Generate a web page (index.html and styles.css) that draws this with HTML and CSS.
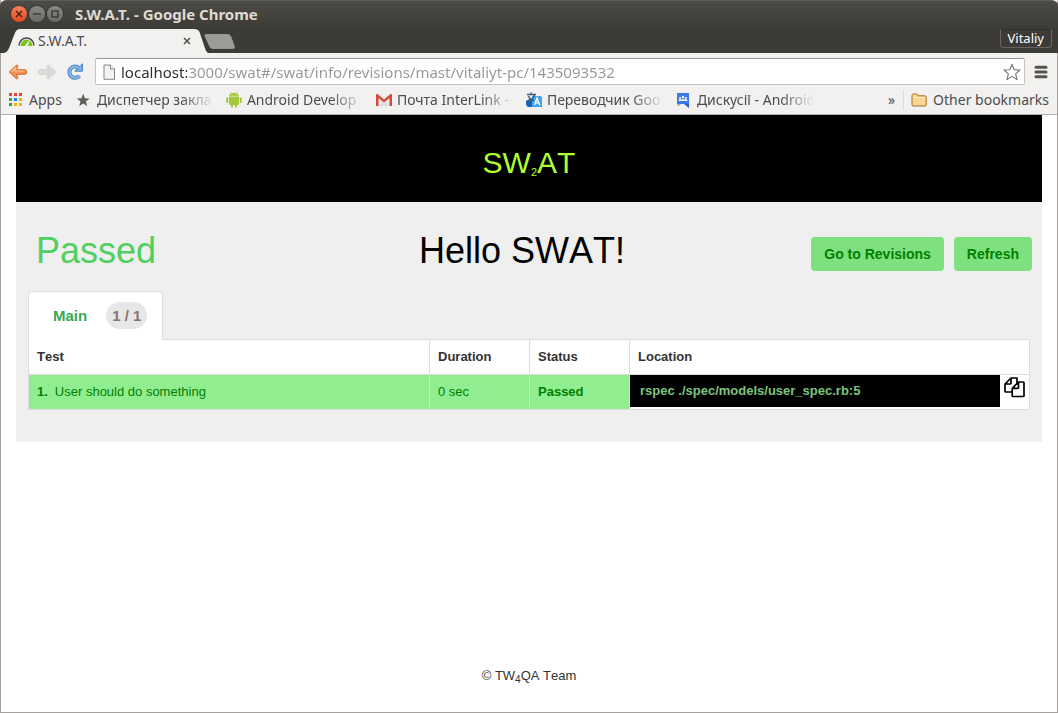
FILE: index.html
```html
<!DOCTYPE html>
<html lang="en">
<head>
<meta charset="utf-8">
<title>S.W.A.T.</title>
<link rel="stylesheet" href="styles.css">
</head>
<body>
<div class="window">
  <header class="frame">
    <div class="titlebar">
      <div class="window-buttons">
        <button class="wbtn wbtn-close" type="button" aria-label="Close window"><svg viewBox="0 0 16 16" width="16" height="16"><path d="M5 5l6 6M11 5l-6 6" stroke="#4a1c0c" stroke-width="1.4"/></svg></button>
        <button class="wbtn" type="button" aria-label="Minimize"><svg viewBox="0 0 16 16" width="16" height="16"><path d="M4 8h8" stroke="#3a3935" stroke-width="1.4"/></svg></button>
        <button class="wbtn" type="button" aria-label="Maximize"><svg viewBox="0 0 16 16" width="16" height="16"><rect x="5" y="5" width="6" height="6" fill="none" stroke="#3a3935" stroke-width="1.4"/></svg></button>
      </div>
      <span class="window-title">S.W.A.T. - Google Chrome</span>
    </div>
    <div class="tabstrip">
      <div class="browser-tab">
        <svg class="tab-shape" viewBox="0 0 204 25" preserveAspectRatio="none" aria-hidden="true"><path d="M0 25C3 24 4 22 5 20L11 4Q12.500 0 16 0H190Q194 0 195.500 3L201 20Q202 24 204 25Z" fill="#f2f1f0"/></svg>
        <svg class="favicon" viewBox="0 0 17 10" width="17" height="10" aria-hidden="true"><path d="M1 9.500A7.500 7.500 0 0 1 16 9.500" fill="none" stroke="#454a50" stroke-width="1.500"/><path d="M2.500 10A6 6.500 0 0 1 14.500 10Z" fill="#7ac51c"/><path d="M7 9.500L12 3.500L9.500 10Z" fill="#fff"/></svg>
        <span class="tab-title">S.W.A.T.</span>
        <button class="tab-close" type="button" aria-label="Close tab"><svg viewBox="0 0 8 8" width="8" height="8"><path d="M1 1l6 6M7 1L1 7" stroke="#55534f" stroke-width="1.600"/></svg></button>
      </div>
      <button class="new-tab" type="button" aria-label="New tab"><svg viewBox="0 0 32 15" width="32" height="15"><path d="M2 .5H24Q26 .5 27 3L30.500 13Q31 14.500 29 14.500H9Q6.500 14.500 5.500 12L1 2Q.5.500 2 .5Z" fill="#9d9c9a" stroke="#b3b2af" stroke-width=".6"/></svg></button>
      <button class="profile" type="button">Vitaliy</button>
    </div>
  </header>

  <nav class="toolbar" aria-label="Navigation">
    <button class="nav-btn" type="button" aria-label="Back"><svg viewBox="0 0 20 16" width="20" height="16"><path d="M8.500 1.200Q9.800 1 10 2.200L8.200 5.800H17Q18.600 6 18.600 8T17 10.200H8.200L10 13.800Q9.800 15 8.500 14.800L1.300 8Z" fill="#f2925a" stroke="#dc5c1e"/><path d="M3.500 7.800L8 3.500L6.800 7H16.500" fill="none" stroke="#fbc08c" stroke-width="1.200"/></svg></button>
    <button class="nav-btn" type="button" aria-label="Forward"><svg viewBox="0 0 20 16" width="20" height="16"><path d="M11.500 1.200Q10.200 1 10 2.200L11.800 5.800H3Q1.400 6 1.400 8T3 10.200H11.800L10 13.800Q10.200 15 11.500 14.800L18.700 8Z" fill="#dddcda" stroke="#cfcecc"/></svg></button>
    <button class="nav-btn" type="button" aria-label="Reload"><svg viewBox="0 0 18 18" width="18" height="18"><path d="M13.500 12.800A5.700 5.700 0 1 1 13 5" fill="none" stroke="#4c86c4" stroke-width="4"/><path d="M16.500.8V8.200H8.800Z" fill="#7aaede" stroke="#4c86c4"/><path d="M13.500 12.800A5.700 5.700 0 1 1 13 5" fill="none" stroke="#8abbe8" stroke-width="2"/></svg></button>
    <div class="omnibox">
      <svg viewBox="0 0 12 16" width="12" height="16" aria-hidden="true"><path d="M1 1H7.500L11.500 5V15.300H1Z" fill="#f4f4f4" stroke="#858585"/><path d="M7.500 1V5H11.500" fill="#fff" stroke="#858585"/></svg>
      <input class="url" type="text" aria-label="Address" value="localhost:3000/swat#/swat/info/revisions/mast/vitaliyt-pc/1435093532">
      <button class="star-btn" type="button" aria-label="Bookmark this page"><svg viewBox="0 0 18 18" width="18" height="18"><path d="M9 1.200L11.200 6.700L17 7L12.600 10.800L14 16.600L9 13.400L4 16.600L5.400 10.800L1 7L6.800 6.700Z" fill="#fff" stroke="#777" stroke-width="1.100" stroke-linejoin="round"/></svg></button>
    </div>
    <button class="menu-btn" type="button" aria-label="Menu"><svg viewBox="0 0 14 14" width="14" height="14"><path d="M2 2.200H12M2 7H12M2 11.800H12" stroke="#55534f" stroke-width="3" stroke-linecap="round"/></svg></button>
  </nav>

  <nav class="bookmarks" aria-label="Bookmarks">
    <a class="bookmark apps" href="#"><svg viewBox="0 0 13 13" width="13" height="13"><path d="M0 0h3v3h-3zM5 0h3v3h-3zM10 0h3v3h-3z" fill="#ea4335"/><path d="M0 5h3v3h-3z" fill="#34a853"/><path d="M5 5h3v3h-3z" fill="#2a7ff0"/><path d="M10 5h3v3h-3zM5 10h3v3h-3zM10 10h3v3h-3z" fill="#f4b400"/><path d="M0 10h3v3h-3z" fill="#2d9a50"/></svg><span>Apps</span></a>
    <a class="bookmark" href="#"><svg viewBox="0 0 16 16" width="16" height="16"><path d="M7.200 1.500L8.900 6.200L13.700 6.400L9.900 9.500L11.200 14.200L7.200 11.500L3.200 14.200L4.500 9.500L.7 6.400L5.500 6.200Z" fill="#62605c"/></svg><span class="bookmark-label">Диспетчер закла</span></a>
    <a class="bookmark" href="#"><svg viewBox="0 0 16 16" width="16" height="16"><path d="M3 5H13V12Q13 13 12 13H11V15.500H9V13H7V15.500H5V13H4Q3 13 3 12ZM.3 5.500H2.200V11H.3ZM13.800 5.500H15.700V11H13.800ZM3 4.500Q3 2.400 5 1.500L4 .3L4.500 0L5.600 1.200Q8 .5 10.400 1.200L11.500 0L12 .3L11 1.500Q13 2.400 13 4.500Z" fill="#a4c639"/><path d="M5.500 2.500h1v1h-1zM9.500 2.500h1v1h-1z" fill="#fff"/></svg><span class="bookmark-label">Android Develop</span></a>
    <a class="bookmark" href="#"><svg viewBox="0 0 16 16" width="16" height="16"><path d="M1 2H15V14H1Z" fill="#eee"/><path d="M3 14L8 8L13 14" fill="#dedede"/><path d="M0 14V3Q0 1.500 1.500 2L8 7.500L14.500 2Q16 1.500 16 3V14H13.500V6L8 10.500L2.500 6V14Z" fill="#d9483b"/></svg><span class="bookmark-label">Почта InterLink -</span></a>
    <a class="bookmark" href="#"><svg viewBox="0 0 16 16" width="16" height="16"><path d="M0 9L4 7L8 10V15H2Q0 14 0 12Z" fill="#1763b8"/><path d="M6 4H14.500Q16 4 16 5.500V15H6Z" fill="#42a5ec"/><path d="M8.500 13L11 6L13.700 13M9.500 10.800H12.800" fill="none" stroke="#fff" stroke-width="1.300"/><path d="M1 2.500H10M5 .5V3M8.500 3Q7 7.500 1 9M2.500 4Q4 8 8 8.500" fill="none" stroke="#425d76" stroke-width="1.500"/></svg><span class="bookmark-label">Переводчик Goo</span></a>
    <a class="bookmark" href="#"><svg viewBox="0 0 16 16" width="16" height="16"><path d="M1 1H13V13.500L10 12H1Z" fill="#3b78e7"/><path d="M13 12V16L8 12Z" fill="#2a5bc4"/><path d="M1 12H5L2 14.500Z" fill="#aaa"/><circle cx="7" cy="5" r="1.300" fill="#fff"/><circle cx="4" cy="6" r="1" fill="#fff"/><circle cx="10" cy="6" r="1" fill="#fff"/><path d="M2.500 9V8Q4 7 5.200 7.500Q7 6.300 8.800 7.500Q10 7 11.500 8V9Z" fill="#fff"/></svg><span class="bookmark-label">Дискусії - Android</span></a>
    <button class="overflow" type="button" aria-label="More bookmarks">»</button>
    <a class="bookmark other" href="#"><svg viewBox="0 0 16 14" width="16" height="14"><path d="M1 12V2.500Q1 1 2.500 1H5.500Q7 1 7 2.800H14Q15.200 3 15.200 4V12Q15.200 13 14 13H2Q1 13 1 12Z" fill="#f9d78e" stroke="#a8702c"/><path d="M2 4.500H14.200" stroke="#fff0c4"/></svg><span>Other bookmarks</span></a>
  </nav>

  <div class="page">
    <header class="banner"><span>SW<sub>2</sub>AT</span></header>
    <main class="panel">
      <div class="heading">
        <div class="result">Passed</div>
        <h1 class="title">Hello SWAT!</h1>
        <div class="actions">
          <button class="btn" type="button">Go to Revisions</button>
          <button class="btn" type="button">Refresh</button>
        </div>
      </div>
      <button class="suite-tab" type="button"><span>Main</span><span class="badge">1 / 1</span></button>
      <table class="results">
        <colgroup><col><col class="c-small"><col class="c-small"><col class="c-loc"></colgroup>
        <thead>
          <tr><th>Test</th><th>Duration</th><th>Status</th><th>Location</th></tr>
        </thead>
        <tbody>
          <tr class="passed">
            <td><b class="num">1.</b>User should do something</td>
            <td>0 sec</td>
            <td><b>Passed</b></td>
            <td class="loc"><div class="loc-row"><span class="command">rspec ./spec/models/user_spec.rb:5</span><button class="copy" type="button" aria-label="Copy command"><svg viewBox="0 0 21 21" width="21" height="21"><path d="M7 1H13V6M13 6.500V1.800Q13 1 12.200 1H7L1 7V14.200Q1 15 1.800 15H8M7 1V6.200Q7 7 6.200 7H1" fill="none" stroke="#000" stroke-width="1.700" stroke-linejoin="round"/><path d="M14.500 5H19.200Q20 5 20 5.800V18.700Q20 19.500 19.200 19.500H9Q8.200 19.500 8.200 18.700V11.300ZM14.500 5V10.500Q14.500 11.300 13.700 11.300H8.200" fill="#fff" stroke="#000" stroke-width="1.700" stroke-linejoin="round"/></svg></button></div></td>
          </tr>
        </tbody>
      </table>
    </main>
    <footer class="footer"><span>© TW<sub>4</sub>QA Team</span></footer>
  </div>
</div>
</body>
</html>
```
FILE: styles.css
```css
* { box-sizing: border-box; }
body { margin: 0; background: #fff; font-family: "Liberation Sans", Arial, sans-serif; }
button { border: 0; padding: 0; background: none; font: inherit; color: inherit; }
svg { display: block; flex: none; }

.window { display: flex; flex-direction: column; min-height: 100vh; border: solid #a5a19c; border-width: 0 1px 1px; }

.frame { margin: 0 -1px; background: linear-gradient(#4d4b46, #3c3b37 28px); border-top: 1px solid #5e5c57; border-radius: 6px 6px 0 0; font-family: "Noto Sans", sans-serif; }
.titlebar { display: flex; align-items: center; gap: 12px; height: 28px; padding: 0 0 2px 11px; }
.window-buttons { display: flex; gap: 2px; }
.wbtn { width: 16px; height: 16px; border-radius: 50%; background: linear-gradient(#8a8882, #6b6963); box-shadow: 0 0 0 1px #373632; }
.wbtn-close { background: linear-gradient(#f58058, #df4b1c); }
.window-title { color: #dfdbd2; font-size: 15px; font-weight: 700; line-height: 20px; }

.tabstrip { display: flex; align-items: flex-start; height: 24px; padding: 0 6px 0 4px; }
.browser-tab { position: relative; display: flex; align-items: center; width: 204px; height: 24px; padding: 0 15px 0 14px; }
.tab-shape { position: absolute; inset: 0; width: 100%; height: 100%; }
.favicon, .tab-title, .tab-close { position: relative; }
.tab-title { flex: 1; margin-left: 3px; color: #4c4c4c; font-size: 14px; line-height: 18px; }
.tab-close { padding: 2px; }
.new-tab { margin: 5px auto 0 -4px; }
.profile { height: 19px; padding: 0 7px; border: 1px solid #68665f; border-top-color: #302f2c; border-radius: 0 0 4px 4px; color: #fff; font-size: 13px; line-height: 17px; }

.toolbar { display: flex; align-items: center; gap: 9px; height: 34px; padding: 3px 9px 0 7px; background: #f2f1f0; }
.omnibox { display: flex; flex: 1; align-items: center; gap: 6px; height: 27px; padding: 0 3px 0 7px; margin-left: 2px; background: #fff; border: 1px solid #c6c3bf; border-top-color: #9b9894; border-radius: 2px; }
.url { flex: 1; min-width: 0; height: 22px; padding: 0; border: 0; outline: 0; background: linear-gradient(90deg, #2b2b2b 66px, #969696 66px); -webkit-background-clip: text; background-clip: text; color: transparent; font-family: "Noto Sans", sans-serif; font-size: 15px; }

.bookmarks { display: flex; align-items: center; height: 28px; padding: 0 8px 2px; background: #f2f1f0; border-bottom: 1px solid #b5b2ae; color: #4c4c4c; font-family: "Noto Sans", sans-serif; font-size: 14px; line-height: 20px; }
.bookmark { display: flex; align-items: center; gap: 5px; margin-right: 12px; color: inherit; text-decoration: none; white-space: nowrap; }
.apps { gap: 7px; margin-right: 14px; }
.bookmark-label { width: 117px; overflow: hidden; -webkit-mask-image: linear-gradient(90deg, #000 84px, transparent); mask-image: linear-gradient(90deg, #000 84px, transparent); }
.overflow { margin-left: auto; padding: 0 8px; }
.other { gap: 6px; margin: 0; padding-left: 7px; border-left: 1px solid #d8d9dc; }

.page { display: flex; flex: 1; flex-direction: column; padding: 0 15px; background: #fff; font-kerning: none; }
.banner { display: flex; align-items: center; justify-content: center; height: 87px; padding-top: 9px; background: #000; color: #adff2f; font-size: 30px; line-height: 40px; }
.banner sub { font-size: 11px; line-height: 0; vertical-align: -3px; }
.panel { padding: 24px 12px 32px; background: #efefef; }
.heading { display: grid; grid-template-columns: 3fr 4fr 3fr; align-items: center; margin: 0 -2px 16px 8px; }
.result { color: #50d060; font-size: 36px; line-height: 49px; }
.title { margin: 0; padding-right: 24px; font-size: 36px; font-weight: 400; line-height: 49px; text-align: center; }
.actions { display: flex; justify-content: flex-end; gap: 10px; padding-top: 7px; white-space: nowrap; }
.btn { height: 34px; padding: 0 13px; border-radius: 4px; background: #7fe07f; color: #008000; font-size: 14px; font-weight: 700; }
.suite-tab { position: relative; display: flex; align-items: center; gap: 19px; height: 49px; margin-bottom: -1px; padding: 0 15px 2px 24px; background: #fff; border: 1px solid #ddd; border-bottom: 0; border-radius: 4px 4px 0 0; color: #36a853; font-size: 15px; font-weight: 700; }
.badge { padding: 0 6px; border-radius: 14px; background: #e7e7e7; color: #8a7373; line-height: 27px; }

.results { width: 100%; table-layout: fixed; border-collapse: collapse; background: #fff; color: #333; font-size: 13px; line-height: 18px; }
.c-loc { width: 400px; }
.c-small { width: 100px; }
.results th, .results td { height: 35px; padding: 0 8px; border: 1px solid #ddd; text-align: left; }
.results .passed td { background: #90ee90; color: #008000; }
.results .passed .loc { padding: 0; background: #fff; vertical-align: top; }
.num { margin-right: 7px; }
.loc-row { display: flex; }
.command { flex: 1; padding-left: 10px; background: #000; color: #7cc47c; font-weight: 700; line-height: 32px; }
.copy { display: flex; justify-content: center; width: 29px; padding-top: 2px; }

.footer { margin-top: auto; padding-bottom: 26px; color: #333; font-size: 13px; line-height: 20px; text-align: center; }
.footer sub { font-size: 10px; line-height: 0; vertical-align: -3px; }
```
